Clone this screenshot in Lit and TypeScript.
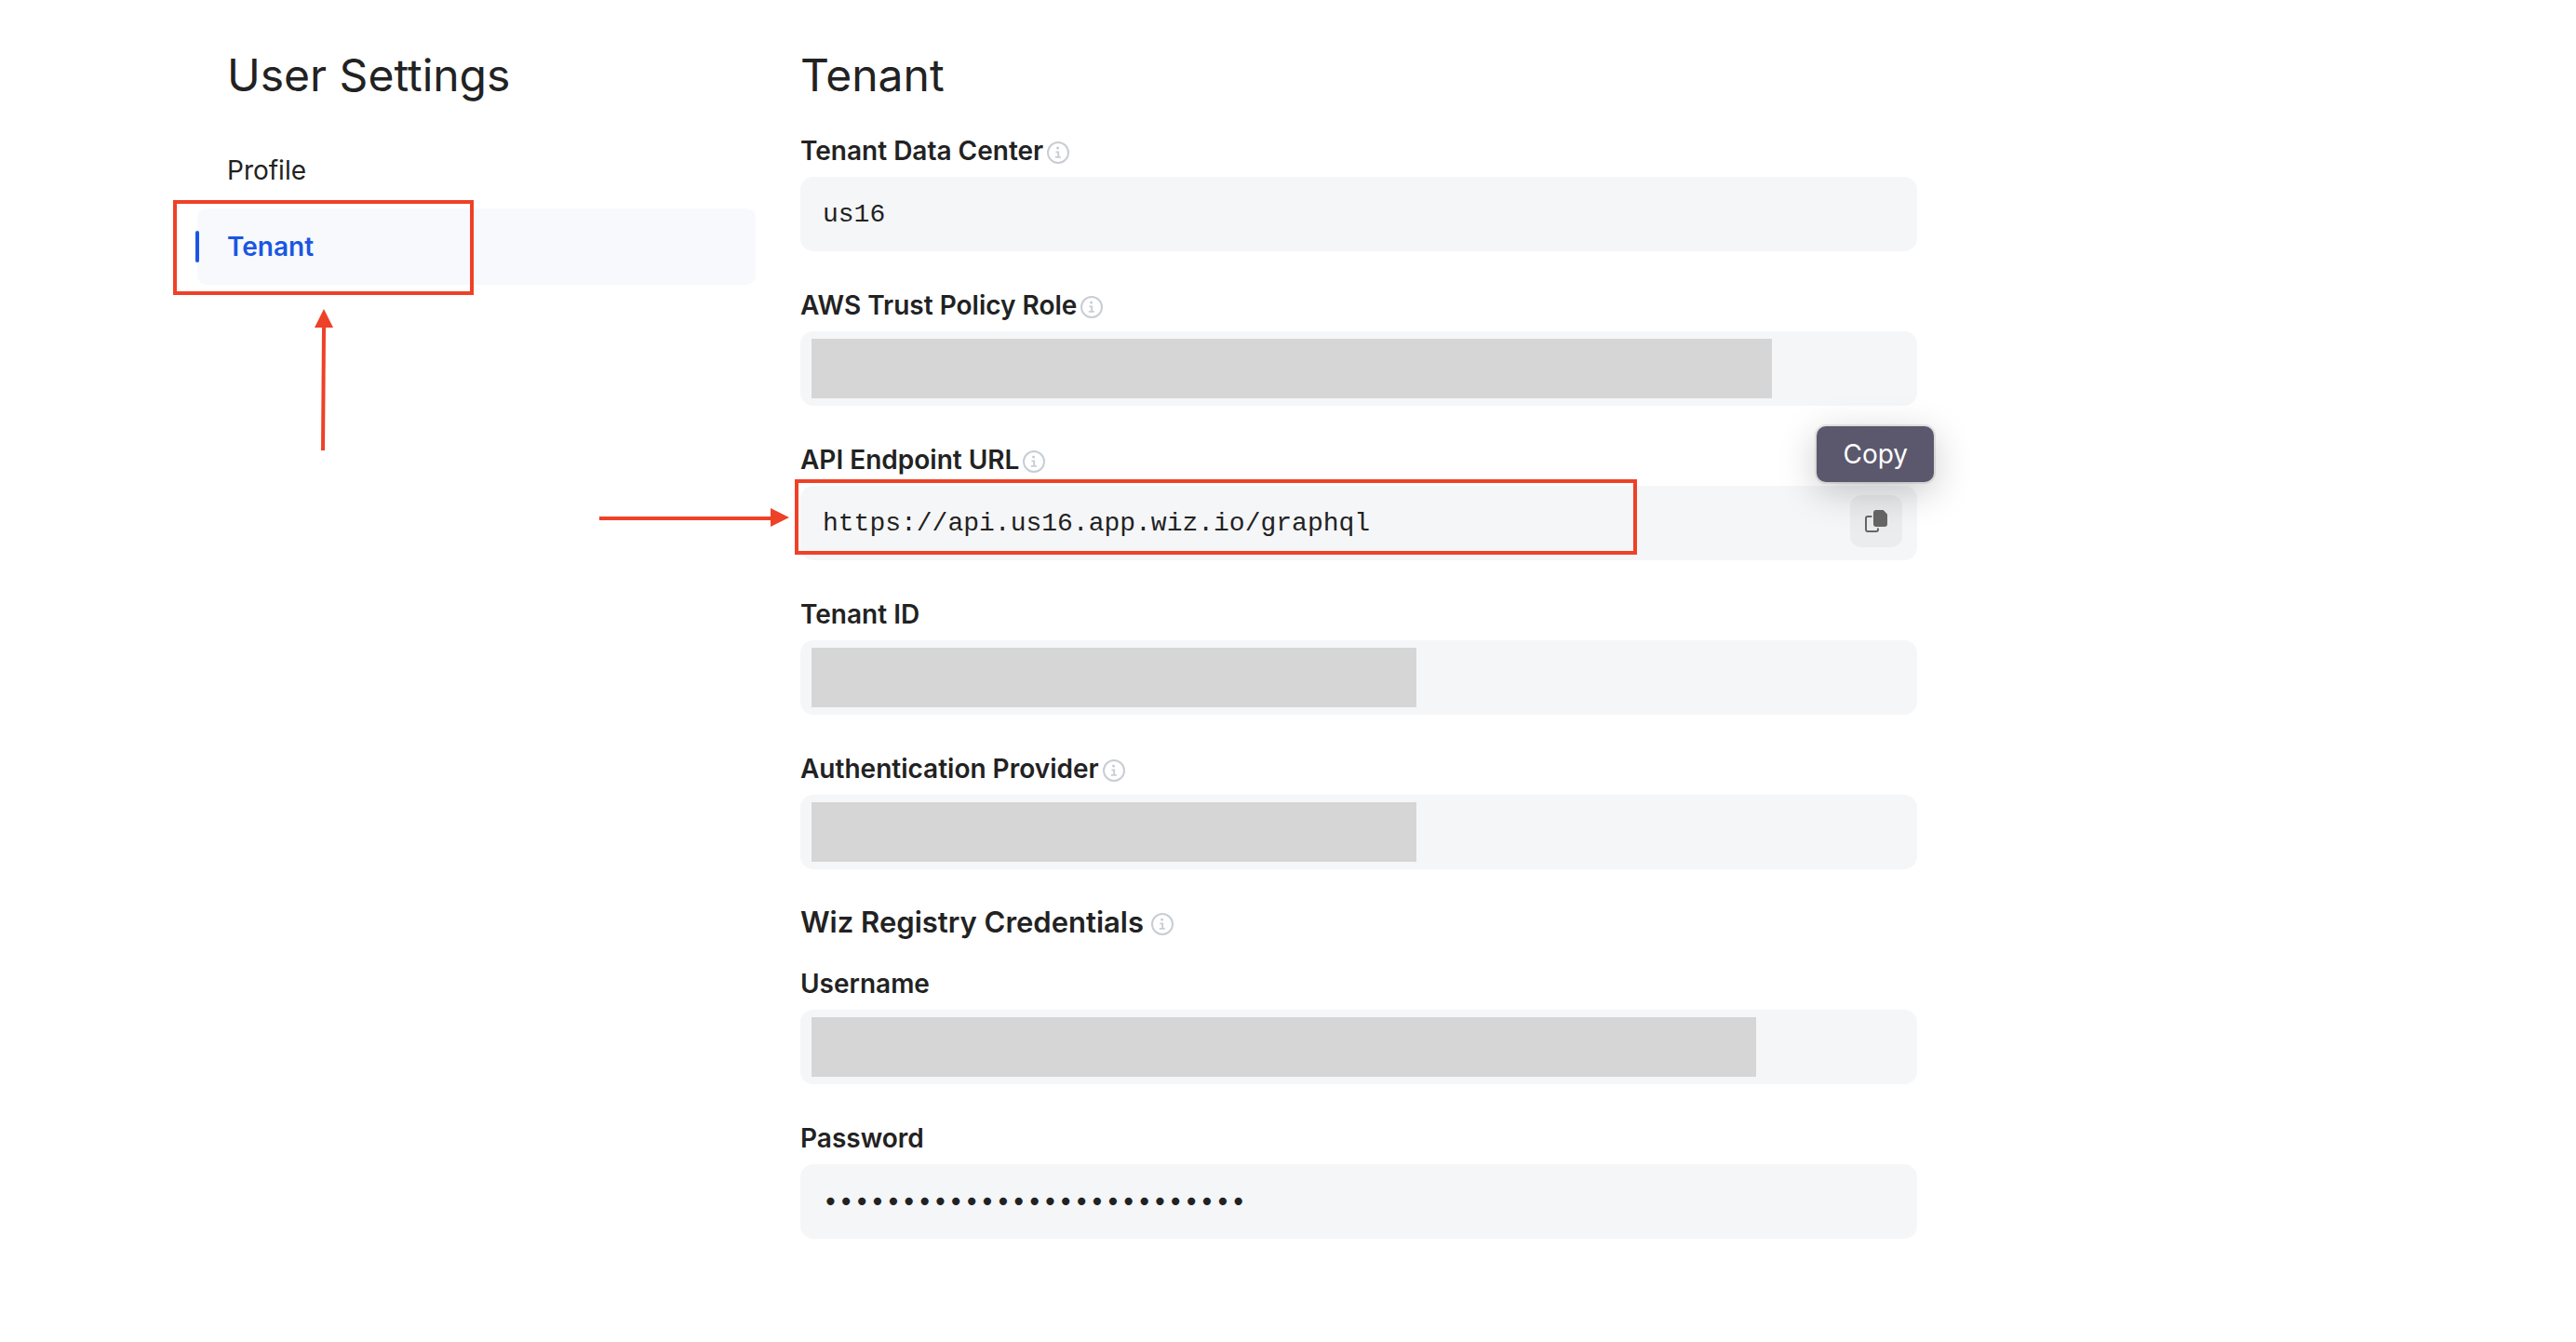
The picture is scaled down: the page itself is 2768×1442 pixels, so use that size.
import { LitElement, html, css, svg, nothing } from "lit";
import { customElement } from "lit/decorators.js";
import { styleMap } from "lit/directives/style-map.js";

interface Field {
  id: string;
  label: string;
  info?: boolean;
  type?: string;
  value?: string;
  /** Share of the box that the redaction bar covers, in percent. */
  redacted?: number;
  marked?: boolean;
}

const TENANT_FIELDS: Field[] = [
  { id: "data-center", label: "Tenant Data Center", info: true, value: "us16" },
  { id: "trust-role", label: "AWS Trust Policy Role", info: true, redacted: 86 },
  {
    id: "endpoint",
    label: "API Endpoint URL",
    info: true,
    value: "https://api.us16.app.wiz.io/graphql",
    marked: true,
  },
  { id: "tenant-id", label: "Tenant ID", redacted: 54.2 },
  { id: "auth-provider", label: "Authentication Provider", info: true, redacted: 54.2 },
];

const REGISTRY_FIELDS: Field[] = [
  { id: "username", label: "Username", redacted: 84.6 },
  { id: "password", label: "Password", type: "password", value: "x".repeat(27) },
];

const infoIcon = html`
  <svg class="info" viewBox="0 0 24 24" aria-hidden="true">
    ${svg`
      <circle cx="12" cy="12" r="11" fill="none" stroke="currentColor" stroke-width="2" />
      <rect x="10.2" y="5.8" width="2.8" height="2.6" rx="0.8" fill="currentColor" />
      <path d="M9.4 11.4h2.8v5.4M8.8 16.9h6" fill="none" stroke="currentColor" stroke-width="1.9" />
    `}
  </svg>
`;

const copyIcon = html`
  <svg class="copy-icon" viewBox="0 0 24 24" aria-hidden="true">
    ${svg`
      <path d="M7.4 7H3a2 2 0 0 0-2 2v12a2 2 0 0 0 2 2h9a2 2 0 0 0 2-2v-1.4" fill="none" stroke="currentColor" stroke-width="2" />
      <path d="M12 0h7.6L24 4.4V15a3 3 0 0 1-3 3h-9a3 3 0 0 1-3-3V3a3 3 0 0 1 3-3z" fill="currentColor" />
    `}
  </svg>
`;

@customElement("app-root")
export class AppRoot extends LitElement {
  static styles = css`
    :host {
      display: block;
      min-height: 100vh;
      background: #ffffff;
      color: #222222;
      font-family: Inter, Roboto, "Liberation Sans", sans-serif;
      font-size: 28px;
      line-height: 32px;
    }
    * {
      box-sizing: border-box;
    }
    .page {
      display: grid;
      grid-template-columns: minmax(0, 600px) minmax(0, 1200px);
      column-gap: 48px;
      padding: 53px 212px 80px;
    }
    h1,
    h2,
    h3 {
      margin: 0;
    }
    .title {
      font-size: 48px;
      line-height: 56px;
      font-weight: 400;
    }
    .side .title {
      padding-left: 32px;
      margin-bottom: 33px;
    }
    .nav {
      display: flex;
      flex-direction: column;
    }
    .nav-item {
      position: relative;
      display: flex;
      align-items: center;
      height: 82px;
      padding: 0 32px;
      border-radius: 10px;
      color: inherit;
      text-decoration: none;
    }
    .nav-item.active {
      background: #f8f9fd;
      color: #1a56e2;
      font-weight: 600;
    }
    .nav-item.active::before {
      content: "";
      position: absolute;
      left: -2px;
      top: 24px;
      width: 4px;
      height: 34px;
      border-radius: 2px;
      background: #1a56e2;
    }
    .mark {
      position: absolute;
      border: 4px solid #ee4127;
      pointer-events: none;
    }
    .mark-nav {
      left: -26px;
      top: -9px;
      width: 323px;
      height: 102px;
    }
    .mark-field {
      left: -6px;
      top: -7px;
      width: 905px;
      height: 81px;
    }
    .arrow {
      position: absolute;
      color: #ee4127;
      pointer-events: none;
    }
    .arrow-up {
      left: 126px;
      top: 108px;
      width: 20px;
      height: 152px;
    }
    .arrow-right {
      left: -216px;
      top: 24px;
      width: 204px;
      height: 20px;
    }
    .main {
      display: flex;
      flex-direction: column;
      gap: 37px;
    }
    .fields {
      display: flex;
      flex-direction: column;
      gap: 42px;
    }
    .field {
      display: flex;
      flex-direction: column;
      gap: 12px;
    }
    .label-row {
      display: flex;
      align-items: center;
      gap: 4px;
      font-weight: 600;
    }
    .section-title {
      display: flex;
      align-items: center;
      gap: 8px;
      font-size: 31px;
      line-height: 40px;
      font-weight: 600;
      margin-bottom: 30px;
    }
    .info {
      width: 24px;
      height: 24px;
      margin-top: 4px;
      color: #c8cdd5;
    }
    .box {
      position: relative;
      display: flex;
      align-items: flex-start;
      height: 80px;
      border-radius: 14px;
      background: #f5f6f8;
    }
    .value {
      flex: 1;
      min-width: 0;
      height: 100%;
      padding: 0 24px;
      border: 0;
      outline: 0;
      background: transparent;
      color: inherit;
      font-family: "Liberation Mono", monospace;
      font-size: 28px;
    }
    .value[type="password"] {
      font-family: "DejaVu Sans Mono", monospace;
    }
    .redaction {
      position: absolute;
      left: 12px;
      top: 8px;
      height: 64px;
      background: #d6d6d6;
    }
    .copy {
      position: relative;
      display: flex;
      align-items: center;
      justify-content: center;
      width: 56px;
      height: 56px;
      margin: 10px 16px 0 0;
      padding: 0;
      border: 0;
      border-radius: 12px;
      background: #ebecee;
      color: #666666;
      font: inherit;
    }
    .copy-icon {
      width: 24px;
      height: 24px;
    }
    .tooltip {
      position: absolute;
      right: -34px;
      bottom: 70px;
      padding: 14px 28px;
      border-radius: 10px;
      background: #5b586d;
      color: #ffffff;
      box-shadow: 0 0 0 2px rgba(0, 0, 0, 0.08), 0 10px 40px rgba(0, 0, 0, 0.22);
    }
  `;

  private renderLabel(field: Field) {
    return html`
      <div class="label-row">
        <label for=${field.id}>${field.label}</label>
        ${field.info ? infoIcon : nothing}
      </div>
    `;
  }

  private renderMarked() {
    return html`
      <button class="copy" type="button" aria-label="Copy">
        ${copyIcon}
        <span class="tooltip" role="tooltip">Copy</span>
      </button>
      <span class="mark mark-field"></span>
      <svg class="arrow arrow-right" viewBox="0 0 204 20" aria-hidden="true">
        <path d="M0 9h184V0l20 10-20 10v-7H0z" fill="currentColor" />
      </svg>
    `;
  }

  private renderField(field: Field) {
    return html`
      <div class="field">
        ${this.renderLabel(field)}
        <div class="box">
          <input
            class="value"
            id=${field.id}
            type=${field.type ?? "text"}
            .value=${field.value ?? ""}
            readonly
          />
          ${field.redacted
            ? html`<span class="redaction" style=${styleMap({ width: `${field.redacted}%` })}></span>`
            : nothing}
          ${field.marked ? this.renderMarked() : nothing}
        </div>
      </div>
    `;
  }

  render() {
    return html`
      <div class="page">
        <aside class="side">
          <h1 class="title">User Settings</h1>
          <nav class="nav">
            <a class="nav-item" href="#profile">Profile</a>
            <a class="nav-item active" href="#tenant" aria-current="page">
              Tenant
              <span class="mark mark-nav"></span>
              <svg class="arrow arrow-up" viewBox="0 0 20 152" aria-hidden="true">
                <path d="M10 0l10 20h-8l-1 132H7l1-132H0z" fill="currentColor" />
              </svg>
            </a>
          </nav>
        </aside>
        <main class="main">
          <h2 class="title">Tenant</h2>
          <div class="fields">${TENANT_FIELDS.map((f) => this.renderField(f))}</div>
          <section>
            <h3 class="section-title">Wiz Registry Credentials ${infoIcon}</h3>
            <div class="fields">${REGISTRY_FIELDS.map((f) => this.renderField(f))}</div>
          </section>
        </main>
      </div>
    `;
  }
}
